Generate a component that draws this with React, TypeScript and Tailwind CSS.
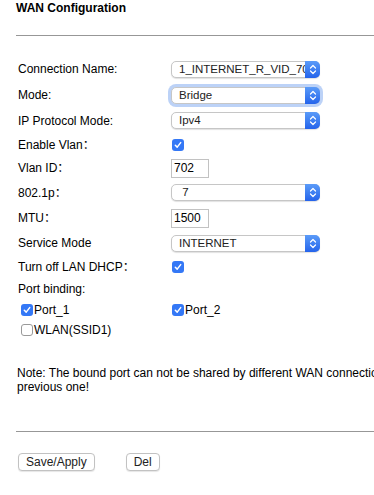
import React from "react";

const font = { fontFamily: '"Liberation Sans", Arial, Helvetica, "Noto Sans CJK SC", sans-serif' };

function Stepper() {
  return (
    <div className="absolute right-[-1px] top-[-1px] bottom-[-1px] w-[15px] rounded-r-[5px] bg-gradient-to-b from-[#5b9bf8] to-[#2563eb] flex items-center justify-center">
      <svg width="8" height="11" viewBox="0 0 8 11" fill="none">
        <path d="M1.5 4 L4 1.5 L6.5 4" stroke="white" strokeWidth="1.2" strokeLinecap="round" strokeLinejoin="round" />
        <path d="M1.5 7 L4 9.5 L6.5 7" stroke="white" strokeWidth="1.2" strokeLinecap="round" strokeLinejoin="round" />
      </svg>
    </div>
  );
}

function Select({ value, focused = false }: { value: string; focused?: boolean }) {
  return (
    <div
      className={
        "relative w-[149px] h-[17px] rounded-[5px] border border-[#c6c6c6] bg-white shadow-[0_1px_1px_rgba(0,0,0,0.12)] " +
        (focused ? "ring-[3px] ring-[#bcd2f7]" : "")
      }
    >
      <div className="absolute left-[7px] right-[14px] top-0 bottom-0 overflow-hidden whitespace-pre text-[11.5px] leading-[15px] text-[#222]">
        {value}
      </div>
      <Stepper />
    </div>
  );
}

function Input({ value }: { value: string }) {
  return (
    <div className="w-[38px] h-[19px] border border-[#c2c2c2] bg-white pl-[2px] text-[12px] leading-[17px] text-black">
      {value}
    </div>
  );
}

function Check({ checked }: { checked: boolean }) {
  return checked ? (
    <div className="w-[12px] h-[12px] rounded-[3px] bg-[#3478f6] flex items-center justify-center">
      <svg width="8" height="8" viewBox="0 0 8 8" fill="none">
        <path d="M1.3 4.2 L3.2 6.1 L6.7 1.6" stroke="white" strokeWidth="1.5" strokeLinecap="round" strokeLinejoin="round" />
      </svg>
    </div>
  ) : (
    <div className="w-[12px] h-[12px] rounded-[3px] border border-[#9a9a9a] bg-white" />
  );
}

function Row({ h, label, children }: { h: string; label: string; children?: React.ReactNode }) {
  return (
    <div className={"flex items-center " + h}>
      <div className="w-[153px] text-[12px] text-black whitespace-nowrap">{label}</div>
      <div className="flex items-center">{children}</div>
    </div>
  );
}

export default function App() {
  return (
    <div className="w-[374px] h-[495px] overflow-hidden bg-white text-black" style={font}>
      <div className="pl-[16px] pt-[1px] text-[12px] leading-[14px] font-bold">WAN Configuration</div>
      <div className="ml-[16px] mt-[20px] h-px w-[600px] bg-[#979797]" />
      <div className="pl-[18px] mt-[20px] flex flex-col">
        <Row h="h-[26px]" label="Connection Name:">
          <Select value="1_INTERNET_R_VID_702" />
        </Row>
        <Row h="h-[26px]" label="Mode:">
          <Select value="Bridge" focused />
        </Row>
        <Row h="h-[25px]" label="IP Protocol Mode:">
          <Select value="Ipv4" />
        </Row>
        <Row h="h-[23px]" label="Enable Vlan：">
          <div className="pl-[1px]">
            <Check checked />
          </div>
        </Row>
        <Row h="h-[24px]" label="Vlan ID：">
          <Input value="702" />
        </Row>
        <Row h="h-[25px]" label="802.1p：">
          <Select value=" 7" />
        </Row>
        <Row h="h-[26px]" label="MTU：">
          <Input value="1500" />
        </Row>
        <Row h="h-[24px]" label="Service Mode">
          <Select value="INTERNET" />
        </Row>
        <Row h="h-[23px]" label="Turn off LAN DHCP：">
          <div className="pl-[1px]">
            <Check checked />
          </div>
        </Row>
        <div className="h-[22px] flex items-center text-[12px]">Port binding:</div>
        <div className="h-[20px] flex items-center text-[12px]">
          <div className="w-[154px] flex items-center pl-[3px]">
            <Check checked />
            <span className="ml-[1px]">Port_1</span>
          </div>
          <div className="flex items-center">
            <Check checked />
            <span className="ml-[1px]">Port_2</span>
          </div>
        </div>
        <div className="h-[19px] flex items-center text-[12px] pl-[3px]">
          <Check checked={false} />
          <span className="ml-[1px]">WLAN(SSID1)</span>
        </div>
      </div>
      <div className="pl-[17px] mt-[27px] w-[700px] text-[12px] leading-[14px]">
        <div className="whitespace-nowrap">
          Note: The bound port can not be shared by different WAN connections, please unbind it from the
        </div>
        <div>previous one!</div>
      </div>
      <div className="ml-[16px] mt-[37px] h-px w-[600px] bg-[#979797]" />
      <div className="pl-[18px] mt-[21px] flex items-center">
        <div className="h-[18px] px-[7px] rounded-[4px] border border-[#c2c2c2] bg-white shadow-[0_1px_1px_rgba(0,0,0,0.1)] text-[12px] leading-[16px] text-[#222]">
          Save/Apply
        </div>
        <div className="ml-[31px] h-[18px] px-[7px] rounded-[4px] border border-[#c2c2c2] bg-white shadow-[0_1px_1px_rgba(0,0,0,0.1)] text-[12px] leading-[16px] text-[#222]">
          Del
        </div>
      </div>
    </div>
  );
}
